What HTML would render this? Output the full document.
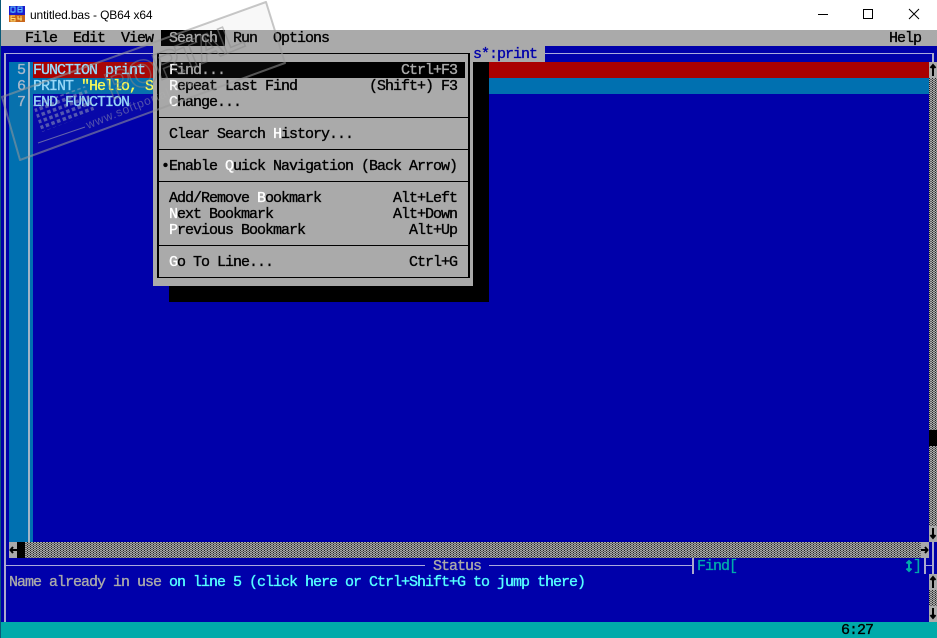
<!DOCTYPE html>
<html><head><meta charset="utf-8"><style>
html,body{margin:0;padding:0;width:937px;height:638px;overflow:hidden;background:#0000aa}
#r{position:relative;width:937px;height:638px;overflow:hidden;background:#0000aa}
.b{position:absolute}
.t{position:absolute;margin-top:1px;font-family:"Liberation Mono",monospace;font-size:15px;letter-spacing:-1.0015px;line-height:16px;height:16px;white-space:pre;-webkit-text-stroke:.35px currentColor}
.k{color:#000}.w{color:#fff}
.d{background-color:#aaa;background-image:radial-gradient(circle at .5px .5px,#222 .6px,transparent .7px),radial-gradient(circle at .5px .5px,#222 .6px,transparent .7px);background-size:3px 2px;background-position:0 0,1.5px 1px}
</style></head><body><div id="r">
<div class="b" style="left:0;top:0;width:937px;height:30px;background:#fff"></div>
<div class="b" style="left:0;top:0;width:1px;height:638px;background:#0a5a78;z-index:9"></div>
<svg class="b" style="left:9px;top:6px" width="16" height="16"><rect width="16" height="16" fill="#1a1acc"/><rect y="9" width="16" height="7" fill="#c9661a"/><path d="M2 1h4v5H2zM4 6v1M9 1h4v5H9zM9 3.500h4" fill="none" stroke="#5ac8ff" stroke-width="1"/><path d="M6 10H2v5h4v-2.500H2M9 10v3h4M12 10v5" fill="none" stroke="#ffe070" stroke-width="1"/></svg>
<div class="b" style="left:30px;top:7px;font:12px/16px 'Liberation Sans',sans-serif;letter-spacing:-.13px;color:#000">untitled.bas - QB64 x64</div>
<svg class="b" style="left:810px;top:0" width="127" height="30" fill="none" stroke="#000" stroke-width="1"><path d="M8 14.500h10M53.500 9.500h9v9h-9zM99 9l10 10M109 9l-10 10"/></svg>

<div class="b" style="left:1px;top:30px;width:936px;height:16px;background:#aaa"></div>
<div class="b" style="left:161px;top:30px;width:64px;height:16px;background:#000"></div>
<div class="t k" style="left:25px;top:30px">File</div>
<div class="t k" style="left:73px;top:30px">Edit</div>
<div class="t k" style="left:121px;top:30px">View</div>
<div class="t" style="left:169px;top:30px;color:#aaa">Search</div>
<div class="t k" style="left:233px;top:30px">Run</div>
<div class="t k" style="left:273px;top:30px">Options</div>
<div class="t k" style="left:889px;top:30px">Help</div>

<!-- frame -->
<div class="b" style="left:4px;top:53px;width:930px;height:1px;background:#aaaadd"></div>
<div class="b" style="left:4px;top:53px;width:2px;height:569px;background:#aaaacc"></div>
<div class="b" style="left:932px;top:53px;width:2px;height:521px;background:#aaaacc"></div>
<div class="b" style="left:473px;top:46px;width:72px;height:16px;background:#aaa"></div>
<div class="t" style="left:473px;top:46px;color:#0000aa">s*:print</div>

<!-- editor -->
<div class="b" style="left:9px;top:62px;width:19px;height:480px;background:#0070b0"></div>
<div class="b" style="left:28px;top:62px;width:2px;height:480px;background:#9fb4c8"></div>
<div class="b" style="left:30px;top:62px;width:3px;height:480px;background:#0070b0"></div>
<div class="b" style="left:33px;top:62px;width:896px;height:16px;background:#aa0000"></div>
<div class="b" style="left:33px;top:78px;width:896px;height:16px;background:#0070b0"></div>
<div class="t" style="left:17px;top:62px;color:#a6b8cc">5</div>
<div class="t" style="left:17px;top:78px;color:#a6b8cc">6</div>
<div class="t" style="left:17px;top:94px;color:#a6b8cc">7</div>
<div class="t" style="left:33px;top:62px;color:#99ddff">FUNCTION print</div>
<div class="t" style="left:33px;top:78px;color:#99ddff">PRINT <span style="color:#ffff55">"Hello, S</span></div>
<div class="t" style="left:33px;top:94px;color:#99ddff">END FUNCTION</div>

<!-- vertical scrollbar -->
<div class="b d" style="left:929px;top:62px;width:8px;height:480px"></div>
<div class="b" style="left:929px;top:62px;width:8px;height:16px;background:#aaa"></div>
<div class="b" style="left:929px;top:430px;width:8px;height:16px;background:#000"></div>
<div class="b" style="left:929px;top:526px;width:8px;height:16px;background:#aaa"></div>
<svg class="b" style="left:929px;top:62px" width="8" height="16" fill="none" stroke="#000" stroke-width="2"><path d="M4 14V4M1.500 6L4 3l2.500 3"/></svg>
<svg class="b" style="left:929px;top:526px" width="8" height="16" fill="none" stroke="#000" stroke-width="2"><path d="M4 2v10M1.500 9L4 12l2.500-3"/></svg>

<!-- horizontal scrollbar -->
<div class="b d" style="left:9px;top:542px;width:920px;height:16px"></div>
<div class="b" style="left:9px;top:542px;width:8px;height:16px;background:#aaa"></div>
<div class="b" style="left:17px;top:542px;width:8px;height:16px;background:#000"></div>
<div class="b" style="left:921px;top:542px;width:8px;height:16px;background:#aaa"></div>
<svg class="b" style="left:9px;top:542px" width="8" height="16" fill="none" stroke="#000" stroke-width="2"><path d="M8 8H1M4 5L1.500 8 4 11"/></svg>
<svg class="b" style="left:921px;top:542px" width="8" height="16" fill="none" stroke="#000" stroke-width="2"><path d="M0 8h7M4 5l2.500 3L4 11"/></svg>

<!-- status -->
<div class="b" style="left:4px;top:565px;width:688px;height:1px;background:#aaaadd"></div>
<div class="b" style="left:425px;top:558px;width:64px;height:16px;background:#0000aa"></div>
<div class="t" style="left:433px;top:558px;color:#aaa">Status</div>
<div class="b" style="left:692px;top:558px;width:2px;height:16px;background:#aaaacc"></div>
<div class="t" style="left:697px;top:558px;color:#00aaaa">Find[</div>
<svg class="b" style="left:905px;top:558px" width="8" height="16" fill="none" stroke="#00aaaa" stroke-width="2"><path d="M4 3v10M1.500 5.500L4 3l2.500 2.500M1.500 10.500L4 13l2.500-2.500"/></svg>
<div class="t" style="left:913px;top:558px;color:#00aaaa">]</div>
<div class="b" style="left:924px;top:558px;width:2px;height:16px;background:#aaaacc"></div>
<div class="b" style="left:924px;top:565px;width:8px;height:1px;background:#aaaadd"></div>
<div class="t" style="left:9px;top:574px;color:#aaa">Name already in use <span style="color:#55ffff">on line 5 (click here or Ctrl+Shift+G to jump there)</span></div>

<div class="b d" style="left:929px;top:574px;width:8px;height:48px"></div>
<div class="b" style="left:929px;top:574px;width:8px;height:16px;background:#aaa"></div>
<div class="b" style="left:929px;top:606px;width:8px;height:16px;background:#aaa"></div>
<svg class="b" style="left:929px;top:574px" width="8" height="16" fill="none" stroke="#000" stroke-width="2"><path d="M4 14V4M1.500 6L4 3l2.500 3"/></svg>
<svg class="b" style="left:929px;top:606px" width="8" height="16" fill="none" stroke="#000" stroke-width="2"><path d="M4 2v10M1.500 9L4 12l2.500-3"/></svg>

<div class="b" style="left:1px;top:622px;width:936px;height:16px;background:#00aaaa"></div>
<div class="t k" style="left:841px;top:622px">6:27</div>

<!-- menu -->
<div class="b" style="left:169px;top:62px;width:320px;height:240px;background:#000"></div>
<div class="b" style="left:153px;top:46px;width:320px;height:240px;background:#aaa"></div>
<div class="b" style="left:157px;top:53px;width:309px;height:223px;border:solid #000;border-width:1px 2px 1px 2px;box-sizing:content-box"></div>
<div class="b" style="left:157px;top:117px;width:312px;height:1px;background:#000"></div>
<div class="b" style="left:157px;top:149px;width:312px;height:1px;background:#000"></div>
<div class="b" style="left:157px;top:181px;width:312px;height:1px;background:#000"></div>
<div class="b" style="left:157px;top:245px;width:312px;height:1px;background:#000"></div>
<div class="b" style="left:161px;top:62px;width:304px;height:16px;background:#000"></div>
<div class="t" style="left:169px;top:62px;color:#aaa"><span class="w">F</span>ind...</div>
<div class="t" style="left:401px;top:62px;color:#aaa">Ctrl+F3</div>
<div class="t k" style="left:169px;top:78px"><span class="w">R</span>epeat Last Find</div>
<div class="t k" style="left:369px;top:78px">(Shift+) F3</div>
<div class="t k" style="left:169px;top:94px"><span class="w">C</span>hange...</div>
<div class="t k" style="left:169px;top:126px">Clear Search <span class="w">H</span>istory...</div>
<div class="t k" style="left:161px;top:158px">•Enable <span class="w">Q</span>uick Navigation (Back Arrow)</div>
<div class="t k" style="left:169px;top:190px">Add/Remove <span class="w">B</span>ookmark</div>
<div class="t k" style="left:393px;top:190px">Alt+Left</div>
<div class="t k" style="left:169px;top:206px"><span class="w">N</span>ext Bookmark</div>
<div class="t k" style="left:393px;top:206px">Alt+Down</div>
<div class="t k" style="left:169px;top:222px"><span class="w">P</span>revious Bookmark</div>
<div class="t k" style="left:409px;top:222px">Alt+Up</div>
<div class="t k" style="left:169px;top:254px"><span class="w">G</span>o To Line...</div>
<div class="t k" style="left:409px;top:254px">Ctrl+G</div>

<!-- watermark -->
<svg class="b" style="left:0;top:0;z-index:10" width="300" height="170">
<defs><pattern id="p" width="6" height="6" patternUnits="userSpaceOnUse" patternTransform="rotate(-20)"><rect width="3.500" height="3.500" fill="#a0a8b8" fill-opacity=".5"/></pattern></defs>
<path d="M2 97L266 2 285 63 20 160Z" fill="#808080" fill-opacity=".06" stroke="#999" stroke-opacity=".55" stroke-width="2" stroke-linejoin="round"/>
<path d="M33 105L85 86 95 112 42 132Z" fill="url(#p)"/>
<text transform="translate(112 100) rotate(-22)" font-family="Liberation Sans,sans-serif" font-weight="bold" font-size="38" fill="none" stroke="#888" stroke-opacity=".5" stroke-width="1.500" textLength="145">PORTAL</text>
<text transform="translate(88 129) rotate(-22)" font-family="Liberation Sans,sans-serif" font-size="12" fill="#b0b0b0" fill-opacity=".45" textLength="118">www.softportal.com</text>
<path d="M38 143L85 127" stroke="#b0b0b0" stroke-opacity=".55" stroke-width="1"/>
</svg>
</div></body></html>
